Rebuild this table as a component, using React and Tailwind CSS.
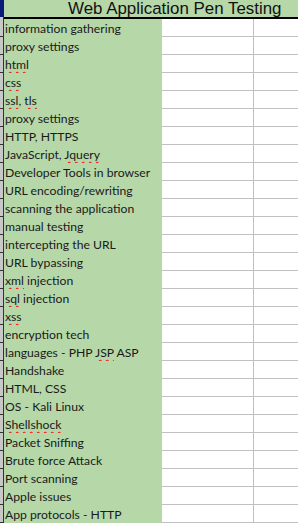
const items = [
  ['information gathering'],
  ['proxy settings'],
  [['html']],
  [['css']],
  [['ssl'], ', ', ['tls']],
  ['proxy settings'],
  ['HTTP, HTTPS'],
  ['JavaScript, ', ['Jquery']],
  ['Developer Tools in browser'],
  ['URL encoding/rewriting'],
  ['scanning the application'],
  ['manual testing'],
  ['intercepting the URL'],
  ['URL bypassing'],
  [['xml'], ' injection'],
  [['sql'], ' injection'],
  [['xss']],
  ['encryption tech'],
  ['languages - PHP ', ['JSP'], ' ASP'],
  ['Handshake'],
  ['HTML, CSS'],
  ['OS - Kali Linux'],
  [['Shellshock']],
  ['Packet Sniffing'],
  ['Brute force Attack'],
  ['Port scanning'],
  ['Apple issues'],
  ['App protocols - HTTP'],
];

function CellText({ parts }) {
  return (
    <span className="whitespace-nowrap">
      {parts.map((p, i) =>
        Array.isArray(p) ? (
          <span key={i} className="underline decoration-wavy decoration-[#ff0000] decoration-1 underline-offset-[2px]">
            {p[0]}
          </span>
        ) : (
          <span key={i}>{p}</span>
        )
      )}
    </span>
  );
}

export default function App() {
  return (
    <div className="w-[298px] h-[526px] overflow-hidden bg-white" style={{ fontFamily: 'Lato, "Open Sans", sans-serif' }}>
      <div className="flex h-[17px]">
        <div className="w-[4px] bg-[#0a1a7a]" />
        <div
          className="flex-1 bg-[#b6d7a8] pl-[64px] text-[16.9px] leading-[17px] text-[#111] whitespace-nowrap overflow-hidden"
          style={{ fontFamily: '"Liberation Sans", Arial, sans-serif' }}
        >
          Web Application Pen Testing
        </div>
      </div>
      <div className="flex h-[2px]">
        <div className="w-[4px] bg-[#c8c8c8] border-r border-[#333]" />
        <div className="flex-1 bg-black" />
      </div>
      {items.map((parts, i) => (
        <div key={i} className="flex h-[18px]">
          <div className="w-[4px] bg-[#c8c8c8] border-r border-b border-[#333]" />
          <div className="w-[158px] bg-[#b6d7a8] flex items-center pt-[2px] pl-[1px] text-[12.2px] text-[#1a1a1a]">
            <CellText parts={parts} />
          </div>
          <div className="w-[92px] border-r border-b border-[#c0c0c0]" />
          <div className="flex-1 border-b border-[#c0c0c0]" />
        </div>
      ))}
    </div>
  );
}
